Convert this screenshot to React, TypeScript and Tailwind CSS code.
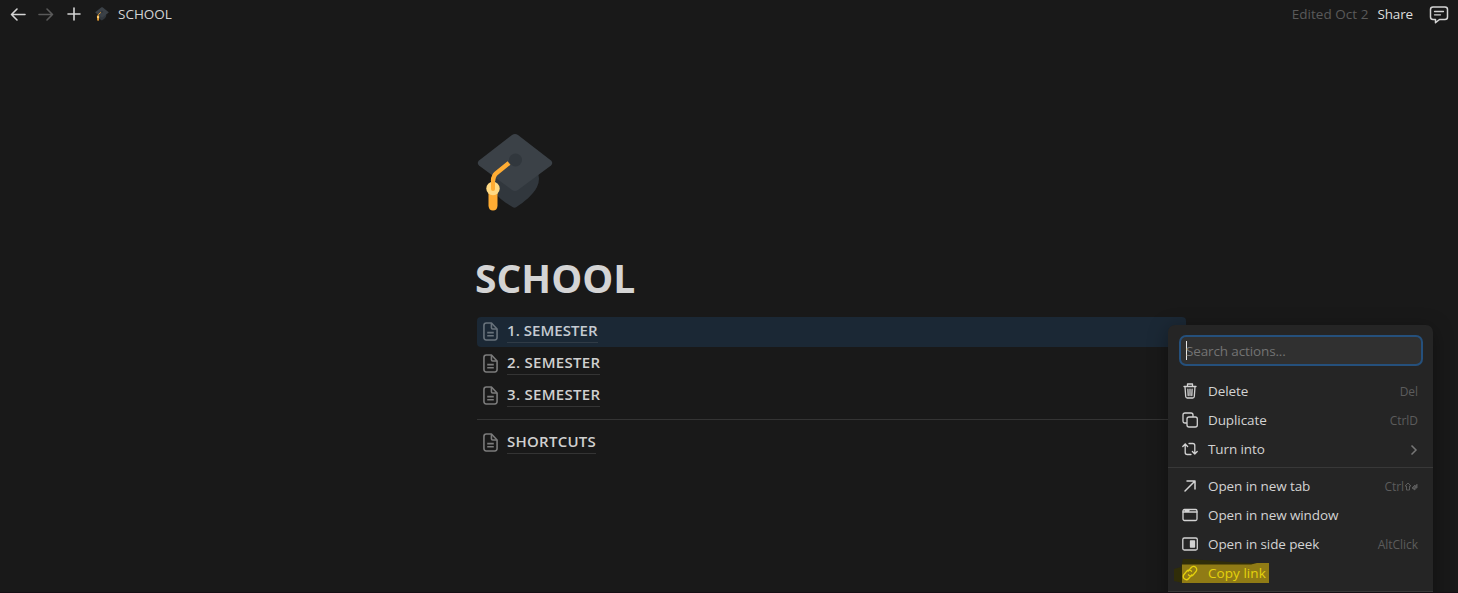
import type { ReactNode } from "react";

function Cap({ className }: { className: string }) {
  return (
    <svg viewBox="0 0 76 78" className={className}>
      <path d="M15 43V54C19 65 31 71 35.500 74Q37.500 75.500 39.500 74C47 69 56 62 60 54Q64 46 60 37Z" fill="#31373d" />
      <path d="M35 2Q38 0 41 2L74 27.500Q76.500 30 74 32.500L41 57Q38 59 35 57L2 32.500Q-.5 30 2 27.500Z" fill="#3b4147" />
      <circle cx="38.500" cy="27" r="6.500" fill="#31373d" />
      <path d="M32 30L19 40.500Q16.500 42.500 16 48" fill="none" stroke="#ffac33" strokeWidth="4.500" />
      <path d="M11.500 57H20.500V73Q20 77.500 16 77.500T11.500 73Z" fill="#ffac33" />
      <circle cx="16" cy="55.500" r="6.700" fill="#ffd983" />
      <path d="M16 46V56" stroke="#ffac33" strokeWidth="4" strokeLinecap="round" />
    </svg>
  );
}

function Doc() {
  return (
    <svg width="15" height="19" viewBox="0 0 16 20" fill="none" stroke="currentColor" strokeWidth="1.700" strokeLinejoin="round" className="mb-px shrink-0">
      <path d="M9 1H3.500Q1 1 1 3.500V16.500Q1 19 3.500 19H12.500Q15 19 15 16.500V7.300Z" />
      <path d="M9 1V6Q9 7.300 10.300 7.300H15M4.500 11.200H11.500M4.500 14.500H11.500" />
    </svg>
  );
}

function PageLink({ children, selected, className }: { children: ReactNode; selected?: boolean; className: string }) {
  return (
    <div className={`flex h-[30px] items-center gap-[9px] rounded-[4px] pl-[6px] ${selected ? "bg-[#1b2835] text-[#68727b]" : "text-[#7b7b7b]"}`}>
      <Doc />
      <span className={`h-[22px] border-b text-[15px] leading-[18px] font-semibold whitespace-nowrap ${selected ? "border-[#303b46] text-[#c5cbd2]" : "border-[#343434] text-[#d0d0d0]"} ${className}`}>{children}</span>
    </div>
  );
}

function Svg({ children }: { children: ReactNode }) {
  return (
    <svg width="16" height="16" viewBox="0 0 16 16" fill="none" stroke="currentColor" strokeWidth="1.300" strokeLinejoin="round" strokeLinecap="round" className="-mt-px shrink-0">
      {children}
    </svg>
  );
}

function Item({ icon, label, hint }: { icon: ReactNode; label: string; hint?: ReactNode }) {
  return (
    <div className="flex h-[29px] items-center pr-[15px] pl-[14px] text-[#d3d3d3]">
      <Svg>{icon}</Svg>
      <span className="ml-[10px] flex-1 text-[13.5px] font-medium tracking-[-0.1px] whitespace-nowrap">{label}</span>
      <span className="flex items-center text-[12px] tracking-[-0.05px] text-[#5c5c5c]">{hint}</span>
    </div>
  );
}

export default function App() {
  return (
    <div className="relative h-[593px] w-[1458px] overflow-hidden border-b border-[#150e14] bg-[#191919] font-['Open_Sans','Noto_Sans',sans-serif] text-[#d4d4d4]">
      <header className="flex h-7 items-center pr-[9px] pl-[10px] text-[13.5px]">
        <svg width="16" height="16" viewBox="0 0 16 16" fill="none" stroke="#d4d4d4" strokeWidth="1.600" strokeLinecap="round" strokeLinejoin="round"><path d="M15 8.500H1.500M7 3L1.500 8.500L7 14" /></svg>
        <svg width="16" height="16" viewBox="0 0 16 16" fill="none" stroke="#5a5a5a" strokeWidth="1.600" strokeLinecap="round" strokeLinejoin="round" className="ml-3"><path d="M1 8.500H14.500M9 3L14.500 8.500L9 14" /></svg>
        <svg width="14" height="14" viewBox="0 0 14 14" stroke="#d4d4d4" strokeWidth="1.600" strokeLinecap="round" className="ml-[13px]"><path d="M1 7H13M7 1V13" /></svg>
        <Cap className="ml-[14px] h-[14px] w-[14px]" />
        <span className="ml-[9px]">SCHOOL</span>
        <span className="ml-auto tracking-[0.03px] text-[#5a5a5a]">Edited Oct 2</span>
        <span className="ml-[9px] font-medium tracking-[-0.15px] text-[#dedede]">Share</span>
        <svg width="20" height="18" viewBox="0 0 20 18" fill="none" stroke="#d4d4d4" strokeWidth="1.500" strokeLinejoin="round" strokeLinecap="round" className="mt-[2px] ml-[16px]">
          <path d="M4 1H16Q18.500 1 18.500 3.500V11Q18.500 13.500 16 13.500H10.500L6.500 16.700V13.500H4Q1.500 13.500 1.500 11V3.500Q1.500 1 4 1Z" />
          <path d="M5.500 5.500H14.500M5.500 8.800H11.500" strokeWidth="1.300" />
        </svg>
      </header>

      <main className="ml-[477px] w-[709px] pt-[105px]">
        <Cap className="h-[78px] w-[76px]" />
        <h1 className="mt-[40px] -ml-[2px] h-[54px] w-max text-[39px] leading-[54px] font-bold">SCHOOL</h1>
        <div className="mt-[12px] flex flex-col gap-[2px]">
          <PageLink selected className="tracking-[0.05px]">1. SEMESTER</PageLink>
          <PageLink className="tracking-[0.3px]">2. SEMESTER</PageLink>
          <PageLink className="tracking-[0.3px]">3. SEMESTER</PageLink>
        </div>
        <hr className="mt-[8px] mb-[8px] border-[#343434]" />
        <PageLink className="tracking-[0.25px]">SHORTCUTS</PageLink>
      </main>

      <div className="absolute top-[325px] left-[1168px] h-[280px] w-[265px] rounded-[7px] bg-[#252525] pt-[12px] shadow-[0_4px_20px_rgba(0,0,0,0.35)]">
        <div className="mr-[12px] mb-[13px] ml-[13px] flex h-[27px] items-center rounded-[5px] bg-[#303030] pl-[5px] text-[13.5px] tracking-[-0.13px] text-[#737373] shadow-[0_0_0_2px_#25507c]">
          <span className="h-[19px] w-px bg-[#e8e8e8]" />
          <span className="-ml-px pt-px">Search actions...</span>
        </div>
        <Item icon={<path d="M2 3.500H14M5.500 3.500V1H10.500V3.500M3 3.500L3.700 13.500Q3.900 15 5.200 15H10.800Q12.100 15 12.300 13.500L13 3.500M5.900 6.200L6.200 12.500M8 6.200V12.500M10.100 6.200L9.800 12.500" />} label="Delete" hint="Del" />
        <Item icon={<><rect x="5" y="5" width="10.300" height="10" rx="2" /><path d="M4.500 11H3Q1 11 1 9V3Q1 1 3 1H9Q11 1 11 3V4.500" /></>} label="Duplicate" hint="CtrlD" />
        <Item icon={<path d="M.8 5.500L3.200 3L5.600 5.500M3.200 3V11.500Q3.200 13.500 5.200 13.500H9M7 2.500H10.800Q12.800 2.500 12.800 4.500V13M10.400 10.500L12.800 13L15.200 10.500" />} label="Turn into" hint={<svg width="8" height="12" viewBox="0 0 8 12" fill="none" stroke="#777" strokeWidth="1.500"><path d="M1.500 1.500L6 6L1.500 10.500" /></svg>} />
        <div className="mt-[3px] mb-[4px] h-px bg-[#383838]" />
        <Item icon={<path d="M3 13L13 3M5 3H13V11" strokeWidth="1.500" />} label="Open in new tab" hint={<>Ctrl<svg width="14" height="9" viewBox="0 0 14 9" fill="none" stroke="currentColor"><path d="M1 4L4 1L7 4H5.500V8H2.500V4Z" /><path d="M13 2V6H9M11 3L8 6L11 8Z" fill="currentColor" /></svg></>} />
        <Item icon={<><rect x="1" y="2.500" width="14" height="11" rx="1.500" /><path d="M1 5H15M3 3.500H7" /></>} label="Open in new window" />
        <Item icon={<><rect x=".8" y="2" width="14.500" height="12" rx="1.500" /><path d="M8.500 5H12.500V11H8.500Z" fill="currentColor" /></>} label="Open in side peek" hint="AltClick" />
        <div className="relative">
          <svg className="absolute top-0 left-[5px]" width="100" height="28" viewBox="0 0 100 28">
            <path d="M17 0L56 3L96 5V24H10L1 22V10L8 8L10 0Z" fill="#302d09" />
            <path d="M9 5.500H78L84 4H96V24H9Z" fill="#907b15" />
          </svg>
          <div className="relative flex h-[29px] items-center pl-[14px] text-[#e5d20c]">
            <Svg><path d="M6.200 6.200L9.300 2.500A3 3 0 0 1 14 6.500L10.800 10.300A3 3 0 0 1 6.500 9.800M9.800 9.800L6.700 13.500A3 3 0 0 1 2 9.500L5.200 5.700A3 3 0 0 1 9.500 6.200" /></Svg>
            <span className="ml-[10px] text-[13.5px] font-medium tracking-[0.05px]">Copy link</span>
          </div>
        </div>
        <div className="mt-[3px] h-px bg-[#383838]" />
      </div>
    </div>
  );
}
